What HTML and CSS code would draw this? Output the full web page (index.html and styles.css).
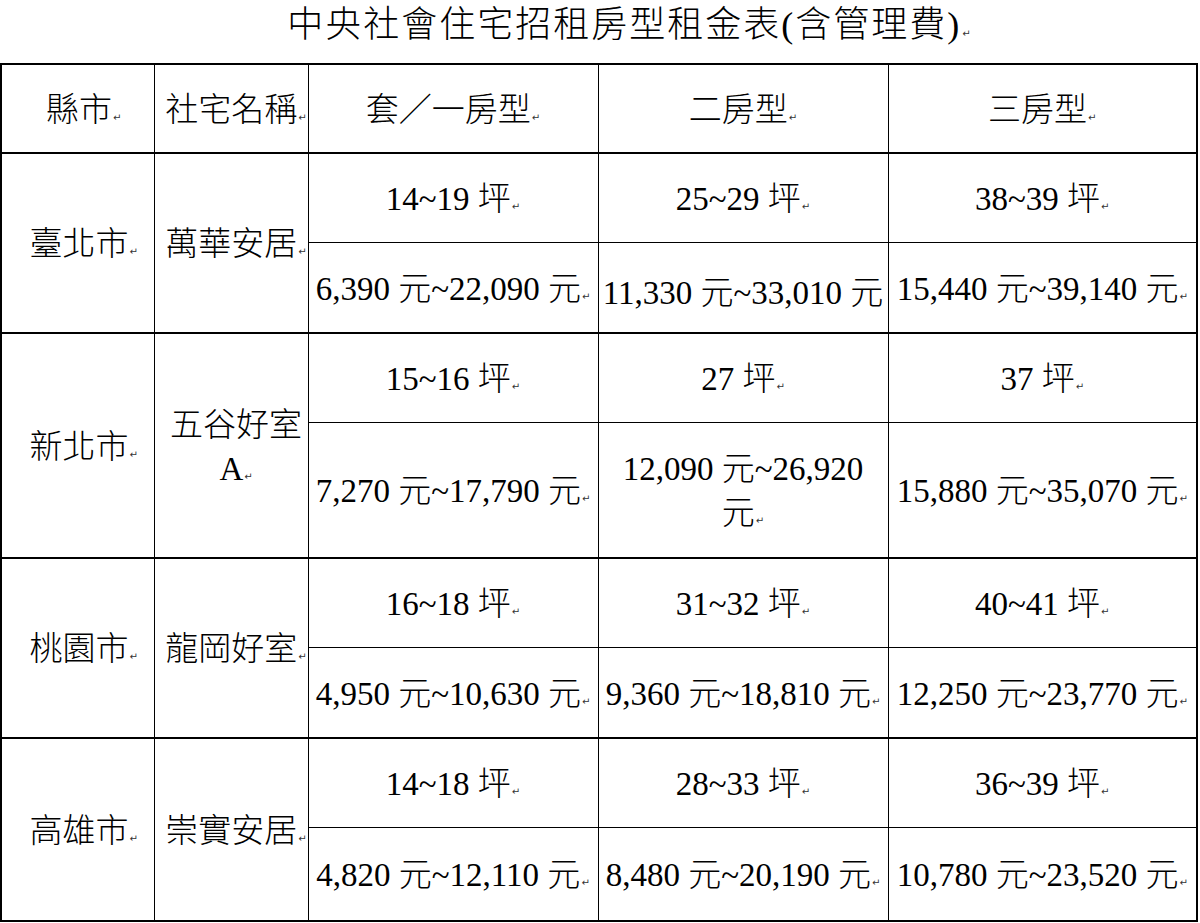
FILE: index.html
```html
<!DOCTYPE html>
<html lang="zh-Hant">
<head>
<meta charset="utf-8">
<title>中央社會住宅招租房型租金表</title>
<link rel="stylesheet" href="styles.css">
</head>
<body>
<h1 class="title">中央社會住宅招租房型租金表(含管理費)<span class="pm">↵</span></h1>
<table class="rent">
  <colgroup>
    <col class="c-city">
    <col class="c-name">
    <col class="c-one">
    <col class="c-two">
    <col class="c-three">
  </colgroup>
  <tr class="head">
    <td class="city">縣市<span class="pm">↵</span></td>
    <td class="name">社宅名稱<span class="pm">↵</span></td>
    <td>套／一房型<span class="pm">↵</span></td>
    <td>二房型<span class="pm">↵</span></td>
    <td>三房型<span class="pm">↵</span></td>
  </tr>

  <tr class="sub first">
    <td class="city" rowspan="2">臺北市<span class="pm">↵</span></td>
    <td class="name" rowspan="2">萬華安居<span class="pm">↵</span></td>
    <td>14~19 坪<span class="pm">↵</span></td>
    <td>25~29 坪<span class="pm">↵</span></td>
    <td>38~39 坪<span class="pm">↵</span></td>
  </tr>
  <tr class="sub second">
    <td>6,390 元~22,090 元<span class="pm">↵</span></td>
    <td>11,330 元~33,010 元</td>
    <td>15,440 元~39,140 元<span class="pm">↵</span></td>
  </tr>

  <tr class="sub first">
    <td class="city" rowspan="2">新北市<span class="pm">↵</span></td>
    <td class="name" rowspan="2">五谷好室<br>A<span class="pm">↵</span></td>
    <td>15~16 坪<span class="pm">↵</span></td>
    <td>27 坪<span class="pm">↵</span></td>
    <td>37 坪<span class="pm">↵</span></td>
  </tr>
  <tr class="sub second tall">
    <td>7,270 元~17,790 元<span class="pm">↵</span></td>
    <td>12,090 元~26,920<br>元<span class="pm">↵</span></td>
    <td>15,880 元~35,070 元<span class="pm">↵</span></td>
  </tr>

  <tr class="sub first">
    <td class="city" rowspan="2">桃園市<span class="pm">↵</span></td>
    <td class="name" rowspan="2">龍岡好室<span class="pm">↵</span></td>
    <td>16~18 坪<span class="pm">↵</span></td>
    <td>31~32 坪<span class="pm">↵</span></td>
    <td>40~41 坪<span class="pm">↵</span></td>
  </tr>
  <tr class="sub second">
    <td>4,950 元~10,630 元<span class="pm">↵</span></td>
    <td>9,360 元~18,810 元<span class="pm">↵</span></td>
    <td>12,250 元~23,770 元<span class="pm">↵</span></td>
  </tr>

  <tr class="sub first">
    <td class="city" rowspan="2">高雄市<span class="pm">↵</span></td>
    <td class="name" rowspan="2">崇實安居<span class="pm">↵</span></td>
    <td>14~18 坪<span class="pm">↵</span></td>
    <td>28~33 坪<span class="pm">↵</span></td>
    <td>36~39 坪<span class="pm">↵</span></td>
  </tr>
  <tr class="sub second last">
    <td>4,820 元~12,110 元<span class="pm">↵</span></td>
    <td>8,480 元~20,190 元<span class="pm">↵</span></td>
    <td>10,780 元~23,520 元<span class="pm">↵</span></td>
  </tr>
</table>
</body>
</html>
```

FILE: styles.css
```css
html, body {
  margin: 0;
  padding: 0;
  background: #ffffff;
}

body {
  width: 1200px;
  color: #000000;
  font-family: "Liberation Serif", "Noto Sans CJK TC", serif;
  font-weight: 300;
}

.title {
  margin: 0 0 12px 0;
  height: 51px;
  line-height: 51px;
  padding-left: 58px;
  text-align: center;
  font-size: 36px;
  font-weight: 300;
  letter-spacing: 2px;
  white-space: nowrap;
}

.pm {
  font-family: "DejaVu Sans", sans-serif;
  font-size: 10px;
  font-weight: 400;
  letter-spacing: 0;
  color: #333333;
  margin-left: 1px;
  vertical-align: 0;
}

.rent {
  border-collapse: collapse;
  table-layout: fixed;
  width: 1196px;
  margin-left: 0;
  border: 2px solid #000000;
  font-size: 33px;
}

.c-city  { width: 153px; }
.c-name  { width: 154px; }
.c-one   { width: 290px; }
.c-two   { width: 290px; }
.c-three { width: 309px; }

.rent td {
  border: 1px solid #000000;
  padding: 10px 2px 0 2px;
  text-align: center;
  vertical-align: middle;
  white-space: nowrap;
  overflow: visible;
  line-height: 44px;
}

.rent td.city {
  padding-left: 14px;
}

.rent td.name {
  padding-left: 10px;
  padding-right: 0;
}

.rent tr.head td {
  height: 76px;
  padding-top: 11px;
  border-bottom-width: 2px;
}

.rent tr.sub td {
  height: 79px;
}

.rent tr.first td {
  height: 78px;
  border-top-width: 2px;
}

.rent tr.tall td {
  height: 124px;
}

.rent tr.last td {
  height: 82px;
}
```
